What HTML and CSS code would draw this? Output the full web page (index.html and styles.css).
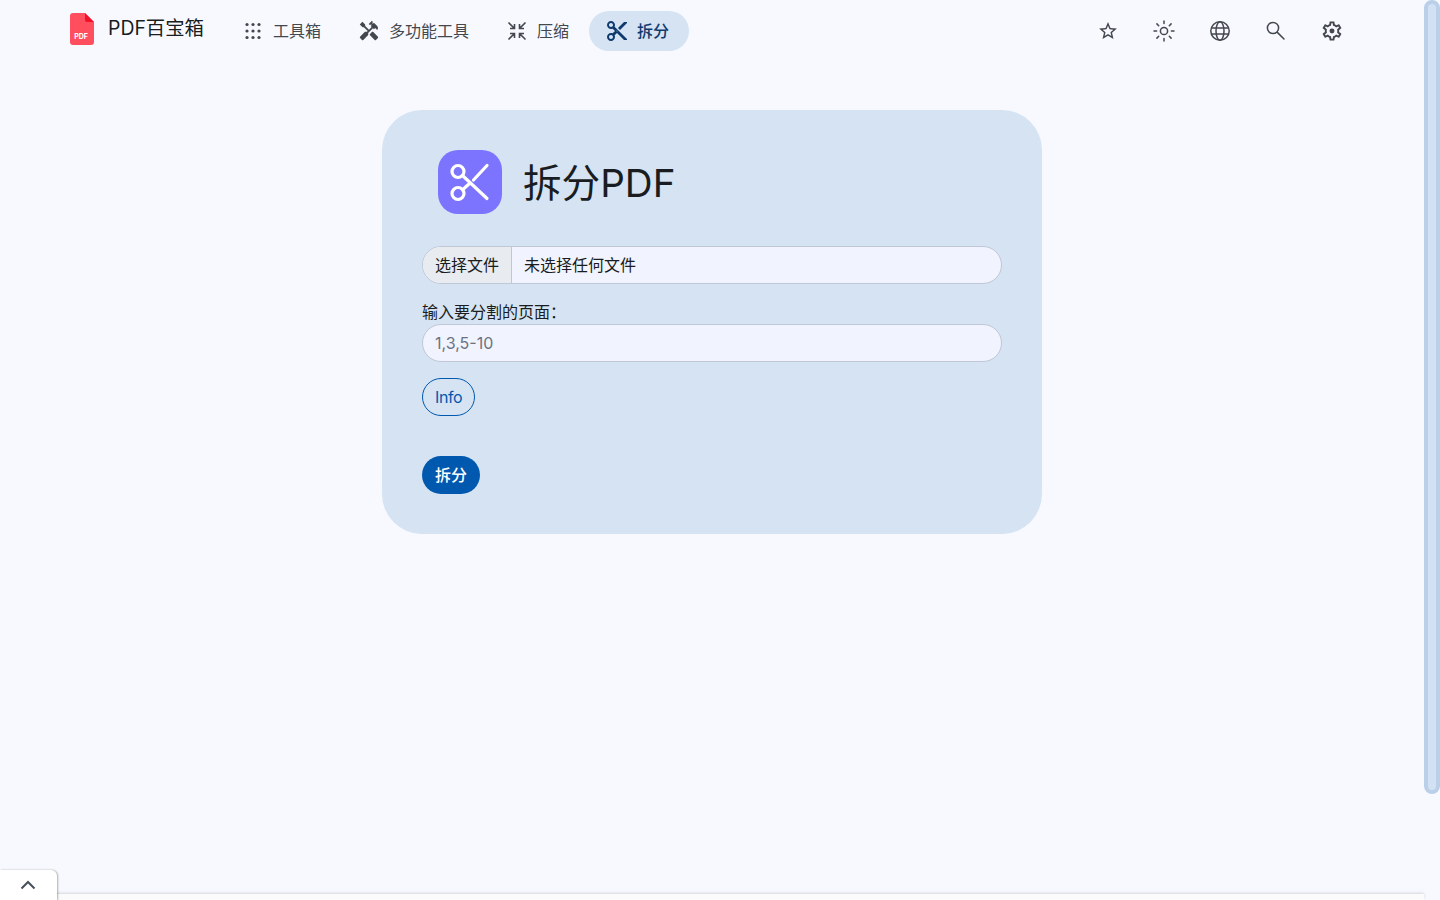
FILE: index.html
```html
<!DOCTYPE html>
<html lang="zh-CN">
<head>
<meta charset="utf-8">
<title>拆分PDF</title>
<link rel="stylesheet" href="styles.css">
</head>
<body>
<div class="page">
  <nav class="navbar">
    <a class="brand">
      <svg class="brand-icon" viewBox="0 0 24 32" width="24" height="32">
        <path d="M3 0H15L24 9V29a3 3 0 0 1-3 3H3a3 3 0 0 1-3-3V3a3 3 0 0 1 3-3Z" fill="#ff4f5e"/>
        <path d="M15 0L24 9H17a2 2 0 0 1-2-2Z" fill="#f0112b"/>
        <text x="11" y="25.5" class="brand-pdf" text-anchor="middle">PDF</text>
      </svg>
      <span class="brand-text">PDF百宝箱</span>
    </a>
    <ul class="menu">
      <li class="menu-item">
        <svg class="icon" viewBox="0 0 24 24"><g fill="currentColor"><circle cx="6" cy="5.5" r="1.6"/><circle cx="12" cy="5.5" r="1.6"/><circle cx="18" cy="5.5" r="1.6"/><circle cx="6" cy="12" r="1.6"/><circle cx="12" cy="12" r="1.6"/><circle cx="18" cy="12" r="1.6"/><circle cx="6" cy="18.5" r="1.6"/><circle cx="12" cy="18.5" r="1.6"/><circle cx="18" cy="18.5" r="1.6"/></g></svg>
        <span>工具箱</span>
      </li>
      <li class="menu-item">
        <svg class="icon" viewBox="-1 -1 26 26"><path fill="currentColor" d="M21.67 18.17l-5.3-5.3h-.99l-2.54 2.54v.99l5.3 5.3c.39.39 1.02.39 1.41 0l2.12-2.12c.39-.38.39-1.02 0-1.41z"/><path fill="currentColor" d="M17.34 10.19l1.41-1.41 2.12 2.12c1.17-1.17 1.17-3.07 0-4.24l-3.54-3.54-1.41 1.41V1.71L15.22 1l-3.54 3.54.71.71h2.83l-1.41 1.41 1.06 1.06-2.89 2.89L7.85 6.48V5.06L4.83 2.04 2 4.87l3.03 3.03h1.41l4.13 4.13-.85.85H7.6l-5.3 5.3c-.39.39-.39 1.02 0 1.41l2.12 2.12c.39.39 1.02.39 1.41 0l5.3-5.3v-2.12l5.15-5.15 1.06 1.06z"/></svg>
        <span>多功能工具</span>
      </li>
      <li class="menu-item">
        <svg class="icon" viewBox="0 0 24 24"><path fill="none" stroke="currentColor" stroke-width="1.6" d="M3.5 3.5L9.5 9.5M9.5 5V9.5H5M20.5 3.5L14.5 9.5M14.5 5V9.5H19M3.5 20.5L9.5 14.5M9.5 19V14.5H5M20.5 20.5L14.5 14.5M14.5 19V14.5H19"/></svg>
        <span>压缩</span>
      </li>
      <li class="menu-item menu-item-active">
        <svg class="icon" viewBox="0 0 24 24"><path fill="currentColor" d="M9.64 7.64c.23-.5.36-1.05.36-1.64 0-2.21-1.79-4-4-4S2 3.79 2 6s1.79 4 4 4c.59 0 1.14-.13 1.64-.36L10 12l-2.36 2.36C7.14 14.13 6.59 14 6 14c-2.21 0-4 1.79-4 4s1.79 4 4 4 4-1.79 4-4c0-.59-.13-1.14-.36-1.64L12 14l7 7h3v-1L9.64 7.64zM6 8c-1.1 0-2-.89-2-2s.9-2 2-2 2 .89 2 2-.9 2-2 2zm0 12c-1.1 0-2-.89-2-2s.9-2 2-2 2 .89 2 2-.9 2-2 2zm6-7.5c-.28 0-.5-.22-.5-.5s.22-.5.5-.5.5.22.5.5-.22.5-.5.5zM19 3l-6 6 2 2 7-7V3z"/></svg>
        <span>拆分</span>
      </li>
    </ul>
    <div class="tools">
      <button class="tool">
        <svg class="icon" viewBox="-1.5 -1.5 27 27"><path fill="currentColor" d="M22 9.24l-7.19-.62L12 2 9.19 8.63 2 9.24l5.46 4.73L5.82 21 12 17.27 18.18 21l-1.63-7.03L22 9.24zM12 15.4l-3.76 2.27 1-4.28-3.32-2.88 4.38-.38L12 6.1l1.71 4.04 4.38.38-3.32 2.88 1 4.28L12 15.4z"/></svg>
      </button>
      <button class="tool">
        <svg class="icon" viewBox="0 0 24 24"><circle cx="12" cy="12" r="3.6" fill="none" stroke="currentColor" stroke-width="1.5"/><path fill="none" stroke="currentColor" stroke-width="1.5" stroke-linecap="round" d="M12 2v2.6M12 19.4V22M2 12h2.6M19.4 12H22M4.9 4.9l1.8 1.8M17.3 17.3l1.8 1.8M4.9 19.1l1.8-1.8M17.3 6.7l1.8-1.8"/></svg>
      </button>
      <button class="tool">
        <svg class="icon" viewBox="0 0 24 24"><g fill="none" stroke="currentColor" stroke-width="1.5"><circle cx="12" cy="12" r="9.2"/><ellipse cx="12" cy="12" rx="4" ry="9.2"/><path d="M3.6 9h16.8M3.6 15h16.8"/></g></svg>
      </button>
      <button class="tool">
        <svg class="icon" viewBox="0 0 24 24"><path fill="none" stroke="currentColor" stroke-width="1.5" stroke-linecap="round" d="M13.6 13.6L20 20"/><circle cx="9" cy="9" r="5.6" fill="none" stroke="currentColor" stroke-width="1.5"/></svg>
      </button>
      <button class="tool">
        <svg class="icon" viewBox="-.5 -.5 25 25"><path fill="currentColor" d="M19.43 12.98c.04-.32.07-.64.07-.98 0-.34-.03-.66-.07-.98l2.11-1.65c.19-.15.24-.42.12-.64l-2-3.46c-.09-.16-.26-.25-.44-.25-.06 0-.12.01-.17.03l-2.49 1c-.52-.4-1.08-.73-1.69-.98l-.38-2.65C14.46 2.18 14.25 2 14 2h-4c-.25 0-.46.18-.49.42l-.38 2.65c-.61.25-1.17.59-1.69.98l-2.49-1c-.06-.02-.12-.03-.18-.03-.17 0-.34.09-.43.25l-2 3.46c-.13.22-.07.49.12.64l2.11 1.65c-.04.32-.07.65-.07.98 0 .33.03.66.07.98l-2.11 1.65c-.19.15-.24.42-.12.64l2 3.46c.09.16.26.25.44.25.06 0 .12-.01.17-.03l2.49-1c.52.4 1.08.73 1.69.98l.38 2.65c.03.24.24.42.49.42h4c.25 0 .46-.18.49-.42l.38-2.65c.61-.25 1.17-.59 1.69-.98l2.49 1c.06.02.12.03.18.03.17 0 .34-.09.43-.25l2-3.46c.12-.22.07-.49-.12-.64l-2.11-1.65zm-1.98-1.71c.04.31.05.52.05.73 0 .21-.02.43-.05.73l-.14 1.13.89.7 1.08.84-.7 1.21-1.27-.51-1.04-.42-.9.68c-.43.32-.84.56-1.25.73l-1.06.43-.16 1.13-.2 1.35h-1.4l-.19-1.35-.16-1.13-1.06-.43c-.43-.18-.83-.41-1.23-.71l-.91-.7-1.06.43-1.27.51-.7-1.21 1.08-.84.89-.7-.14-1.13c-.03-.31-.05-.54-.05-.74s.02-.43.05-.73l.14-1.13-.89-.7-1.08-.84.7-1.21 1.27.51 1.04.42.9-.68c.43-.32.84-.56 1.25-.73l1.06-.43.16-1.13.2-1.35h1.39l.19 1.35.16 1.13 1.06.43c.43.18.83.41 1.23.71l.91.7 1.06-.43 1.27-.51.7 1.21-1.07.85-.89.7.14 1.13z"/><circle cx="12" cy="12" r="2.6" fill="currentColor"/></svg>
      </button>
    </div>
  </nav>

  <main class="main">
    <section class="card">
      <header class="card-header">
        <div class="card-icon">
          <svg viewBox="0 0 64 64" width="64" height="64"><g fill="none" stroke="#fff" stroke-width="3.2" stroke-linecap="round"><circle cx="20" cy="21.5" r="6"/><circle cx="20" cy="43.5" r="6"/><path d="M24.5 25.5L49 48.5M24.8 39.5L31 34M35.5 30L49 15.5"/></g></svg>
        </div>
        <h1 class="card-title">拆分PDF</h1>
      </header>

      <div class="file-input">
        <span class="file-button">选择文件</span>
        <span class="file-name">未选择任何文件</span>
      </div>

      <label class="field-label" for="pages">输入要分割的页面：</label>
      <input class="text-input" id="pages" type="text" placeholder="1,3,5-10">

      <button class="btn-info">Info</button>
      <button class="btn-submit">拆分</button>
    </section>
  </main>

  <footer class="footer-bar">
    <div class="footer-tab">
      <svg class="footer-chevron" viewBox="0 0 16 10" width="16" height="10"><path d="M1.5 8.5L8 2l6.5 6.5" fill="none" stroke="#49505a" stroke-width="2"/></svg>
    </div>
  </footer>
  <div class="scrollbar"><div class="scrollbar-thumb"></div></div>
</div>
</body>
</html>
```
FILE: styles.css
```css
* { box-sizing: border-box; }
html, body { margin: 0; height: 100%; overflow: hidden; }
body {
  background: #f8f9ff;
  color: #191c20;
  font-family: Inter, "Noto Sans CJK SC", sans-serif;
  font-size: 16px;
  line-height: 24px;
}
.page { position: relative; height: 900px; width: 1440px; }

.navbar {
  display: flex;
  align-items: center;
  width: 1424px;
  padding: 11px 72px 11px 70px;
}
.brand { display: flex; align-items: center; gap: 14px; width: 155px; }
.brand-icon { display: block; margin-top: -4px; }
.brand-pdf { font: 700 7px Inter, sans-serif; fill: #fff; }
.brand-text { font-size: 19.4px; line-height: 32px; margin-top: -6px; color: #191c20; white-space: nowrap; }

.menu { display: flex; list-style: none; margin: 0; padding: 0; }
.menu-item {
  display: flex;
  align-items: center;
  gap: 8px;
  height: 40px;
  padding: 0 20px 0 16px;
  border-radius: 20px;
  color: #43474e;
  white-space: nowrap;
}
.menu-item-active { background: #d5e3f3; color: #0f3a6e; font-weight: 500; }
.icon { width: 24px; height: 24px; display: block; }

.tools { display: flex; gap: 16px; margin-left: auto; }
.tool {
  width: 40px;
  height: 40px;
  padding: 8px;
  border: 0;
  background: none;
  color: #43474e;
}

.main { display: flex; justify-content: center; padding-top: 48px; width: 1424px; }
.card {
  width: 660px;
  padding: 40px;
  border-radius: 40px;
  background: #d5e3f3;
  display: flex;
  flex-direction: column;
  align-items: flex-start;
}
.card-header { display: flex; align-items: center; gap: 21px; padding-left: 16px; margin-bottom: 32px; }
.card-icon { width: 64px; height: 64px; border-radius: 20px; background: #7c74ff; }
.card-icon svg { display: block; }
.card-title { margin: 0; padding-top: 1px; font-size: 38.6px; line-height: 48px; font-weight: 400; color: #191c20; }

.file-input {
  display: flex;
  width: 100%;
  height: 38px;
  border: 1px solid #c0c7d6;
  border-radius: 19px;
  background: #f1f4ff;
  overflow: hidden;
  margin-bottom: 16px;
  color: #191c20;
}
.file-button {
  padding: 6px 12px;
  background: #e8ecf1;
  border-right: 1px solid #c0c7d6;
  color: #191c20;
}
.file-name { padding: 6px 12px; }

.field-label { display: block; color: #191c20; }
.text-input {
  display: block;
  width: 100%;
  height: 38px;
  padding: 6px 12px;
  border: 1px solid #c0c7d6;
  border-radius: 19px;
  background: #f1f4ff;
  font: inherit;
  color: #191c20;
  margin-bottom: 16px;
}
.text-input::placeholder { color: #6b7280; opacity: 1; }

.btn-info {
  height: 38px;
  padding: 6px 12px;
  border: 1px solid #0059ae;
  border-radius: 19px;
  background: transparent;
  color: #0059ae;
  font: inherit;
  letter-spacing: -0.4px;
  margin-bottom: 40px;
}
.btn-submit {
  height: 38px;
  padding: 6px 13px;
  border: 0;
  border-radius: 19px;
  background: #0059ae;
  color: #fff;
  font: inherit;
  font-weight: 500;
}

.footer-bar {
  position: absolute;
  left: 0;
  bottom: 0;
  width: 1424px;
  height: 6px;
  background: #fbfbfc;
  box-shadow: 0 -1px 3px rgba(0, 0, 0, 0.14);
}
.footer-tab {
  position: absolute;
  left: 0;
  bottom: 0;
  width: 57px;
  height: 30px;
  background: #fff;
  border-radius: 0 6px 0 0;
  box-shadow: 1px 0 2px rgba(0, 0, 0, 0.3);
  display: flex;
  justify-content: center;
  padding-top: 10px;
}
.footer-chevron { margin-right: 1px; }

.scrollbar { position: absolute; top: 0; right: 0; width: 16px; height: 794px; }
.scrollbar-thumb {
  height: 100%;
  border: 4px solid #b9d0e8;
  border-radius: 8px;
  background: #d2e2f4;
}
```
